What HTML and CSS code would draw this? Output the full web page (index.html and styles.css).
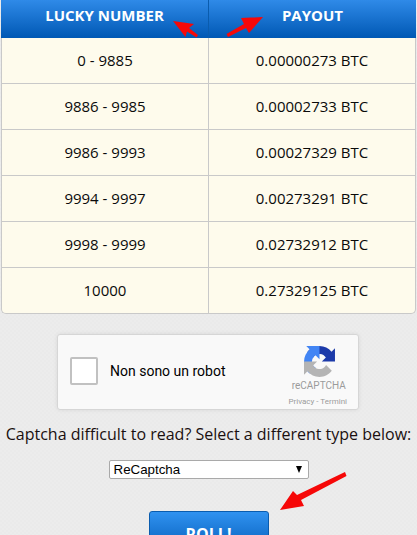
FILE: index.html
```html
<!DOCTYPE html>
<html lang="en">
<head>
<meta charset="utf-8">
<title>Lucky Number</title>
<link rel="stylesheet" href="styles.css">
</head>
<body>
<main class="page">
  <table class="payouts">
    <thead>
      <tr><th>LUCKY NUMBER</th><th>PAYOUT</th></tr>
    </thead>
    <tbody>
      <tr><td>0 - 9885</td><td>0.00000273 BTC</td></tr>
      <tr><td>9886 - 9985</td><td>0.00002733 BTC</td></tr>
      <tr><td>9986 - 9993</td><td>0.00027329 BTC</td></tr>
      <tr><td>9994 - 9997</td><td>0.00273291 BTC</td></tr>
      <tr><td>9998 - 9999</td><td>0.02732912 BTC</td></tr>
      <tr><td>10000</td><td>0.27329125 BTC</td></tr>
    </tbody>
  </table>

  <div class="captcha">
    <span class="captcha-check"></span>
    <span class="captcha-label">Non sono un robot</span>
    <div class="captcha-brand">
      <svg class="captcha-logo" viewBox="0 0 64 64" width="31" height="31" aria-hidden="true">
        <path fill="#1c3aa9" d="M64 31.955l-.033-1.37V4.687l-7.16 7.16C50.948 4.674 42.033.093 32.05.093c-10.39 0-19.62 4.966-25.46 12.656l11.737 11.86a15.55 15.55 0 0 1 4.744-5.32c2.05-1.6 4.955-2.907 9-2.907.488 0 .866.057 1.143.164 5.012.396 9.356 3.162 11.914 7.175l-8.308 8.308c10.523-.04 22.41-.066 27.18.1"/>
        <path fill="#4285f4" d="M31.957.002l-1.37.033H4.687l7.16 7.16C4.674 13.053.093 21.968.093 31.95c0 10.39 4.966 19.62 12.656 25.46l11.86-11.738a15.55 15.55 0 0 1-5.32-4.744c-1.6-2.05-2.907-4.955-2.907-9 0-.488.057-.866.164-1.143.396-5.012 3.162-9.356 7.175-11.914l8.308 8.308c-.04-10.523-.066-22.41.1-27.18"/>
        <path fill="#b4b4b4" d="M.002 31.955l.033 1.37v25.9l7.16-7.16c5.86 7.173 14.774 11.754 24.76 11.754 10.39 0 19.62-4.966 25.46-12.656l-11.86-11.737a15.55 15.55 0 0 1-4.744 5.32c-2.05 1.6-4.955 2.907-9 2.907-.488 0-.866-.057-1.143-.164-5.012-.396-9.356-3.162-11.914-7.175l8.308-8.308c-10.523.04-22.41.066-27.18-.1"/>
      </svg>
      <span class="captcha-name">reCAPTCHA</span>
      <span class="captcha-links">Privacy - Termini</span>
    </div>
  </div>

  <p class="hint">Captcha difficult to read? Select a different type below:</p>

  <div class="type-field">
    <select class="type-select">
      <option>ReCaptcha</option>
    </select>
  </div>

  <button class="roll" type="button">ROLL!</button>
</main>

<svg class="arrows" width="417" height="535" viewBox="0 0 417 535" aria-hidden="true">
  <g fill="#f60808">
    <path d="M173 21l21 3-5 4 9 7-1.500 2.500-9.500-6-1.500 5.500z"/>
    <path d="M263 17l-14 16-3-5-18 9-1.500-3 17.500-10-3-6z"/>
    <path d="M345 472l1.500 4-45.500 24 3 6-24 4 13-19 4 4z"/>
  </g>
</svg>
</body>
</html>
```

FILE: styles.css
```css
html, body {
  margin: 0;
  padding: 0;
  height: 535px;
  overflow: hidden;
}

body {
  position: relative;
  background: repeating-conic-gradient(#ececec 0 25%, #eaeaea 0 50%) 0 0 / 4px 4px;
  font-family: "Open Sans", sans-serif;
  color: #0a0a0a;
}

.page {
  display: flex;
  flex-direction: column;
  align-items: center;
}

.payouts {
  align-self: flex-start;
  width: 415px;
  margin-left: 1px;
  border-collapse: separate;
  border-spacing: 0;
  table-layout: fixed;
  font-size: 15px;
}

.payouts th {
  height: 38px;
  padding: 0 0 9px;
  box-sizing: border-box;
  background: linear-gradient(#2f8ae8, #0058b4);
  color: #fff;
  font-size: 15px;
  font-weight: 700;
  text-align: center;
  border-left: 1px solid #0a5cae;
}

.payouts th:first-child {
  width: 207px;
  border-left: 0;
}

.payouts td {
  height: 46px;
  padding: 0 0 2px;
  box-sizing: border-box;
  background: #fefbec;
  text-align: center;
  border-bottom: 1px solid #c9c9c9;
  border-left: 1px solid #c9c9c9;
}

.payouts td:last-child {
  border-right: 1px solid #c9c9c9;
}

.payouts tbody tr:last-child td:first-child {
  border-bottom-left-radius: 5px;
}

.payouts tbody tr:last-child td:last-child {
  border-bottom-right-radius: 5px;
}

.captcha {
  box-sizing: border-box;
  width: 302px;
  height: 76px;
  margin: 20px 1px 0 0;
  padding-bottom: 2px;
  display: flex;
  align-items: center;
  background: #f9f9f9;
  border: 1px solid #d6d6d6;
  border-radius: 3px;
  box-shadow: 0 0 4px rgba(0, 0, 0, 0.08);
  font-family: Roboto, sans-serif;
}

.captcha-check {
  box-sizing: border-box;
  width: 28px;
  height: 28px;
  margin-left: 12px;
  flex: none;
  background: #fff;
  border: 2px solid #c1c1c1;
  border-radius: 2px;
}

.captcha-label {
  margin-left: 12px;
  font-size: 14px;
  color: #000;
}

.captcha-brand {
  align-self: flex-start;
  margin-left: auto;
  margin-right: 11px;
  display: flex;
  flex-direction: column;
  align-items: center;
  padding-top: 11px;
}

.captcha-logo {
  display: block;
  margin-left: 4px;
}

.captcha-name {
  margin-top: 3px;
  margin-left: 2px;
  font-size: 10px;
  line-height: 12px;
  color: #9b9b9b;
}

.captcha-links {
  margin-top: 5px;
  font-size: 8px;
  line-height: 10px;
  color: #9b9b9b;
}

.hint {
  margin: 13px 0 0;
  font-size: 16px;
  line-height: 22px;
  white-space: nowrap;
  color: #1a1010;
}

.type-field {
  position: relative;
  width: 200px;
  height: 19px;
  margin-top: 15px;
}

.type-field::after {
  content: "";
  position: absolute;
  right: 7px;
  top: 6px;
  border-left: 3px solid transparent;
  border-right: 3px solid transparent;
  border-top: 7px solid #000;
  pointer-events: none;
}

.type-select {
  display: block;
  width: 100%;
  height: 100%;
  padding: 0 0 0 4px;
  box-sizing: border-box;
  appearance: none;
  background: #fff;
  border: 1px solid #a9a9a9;
  border-radius: 2px;
  font-family: "Liberation Sans", Arial, sans-serif;
  font-size: 13.33px;
  color: #000;
}

.roll {
  width: 120px;
  height: 46px;
  margin-top: 32px;
  flex: none;
  background: linear-gradient(#3092f0, #0058b4);
  border: 1px solid #0a5cae;
  border-radius: 3px;
  color: #fff;
  font-family: "Open Sans", sans-serif;
  font-size: 16px;
  font-weight: 700;
}

.arrows {
  position: absolute;
  left: 0;
  top: 0;
  pointer-events: none;
}
```
